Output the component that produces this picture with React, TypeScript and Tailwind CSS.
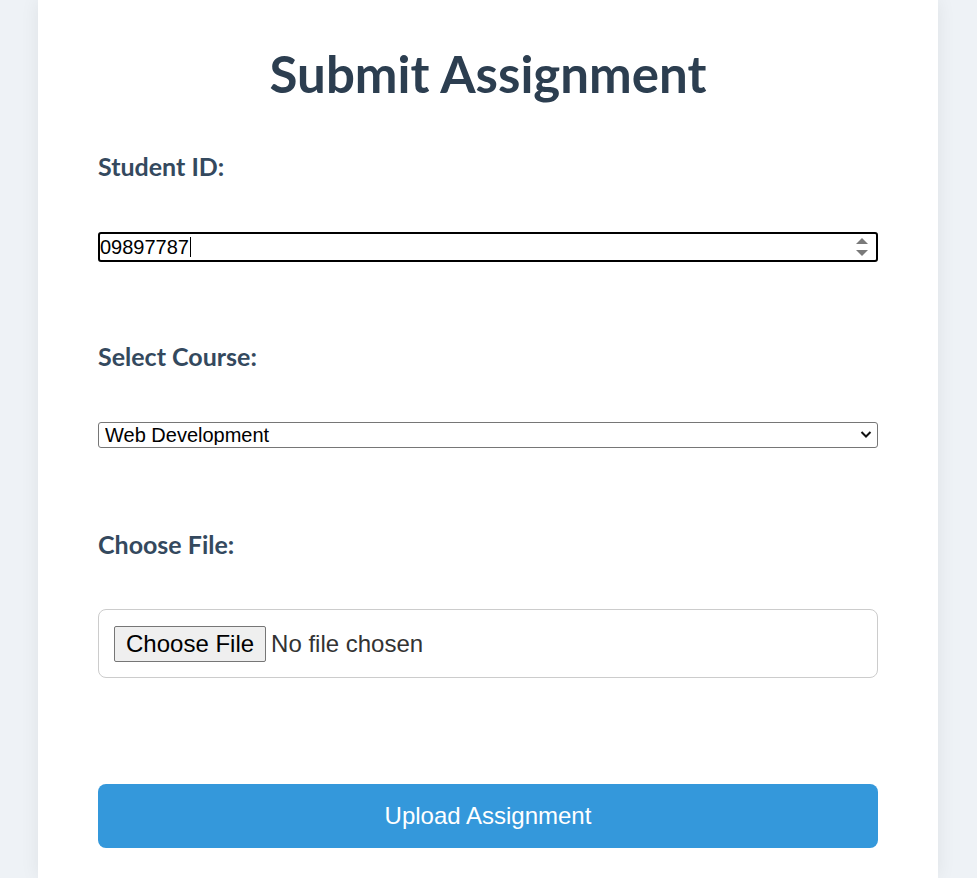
import React from 'react';

const headFont = { fontFamily: 'Lato, "Open Sans", sans-serif' };

const Label = ({ children, className }: { children: React.ReactNode; className?: string }) => (
	<label className={`block text-[25px] leading-[30px] font-bold text-[#34495e] ${className ?? ''}`} style={headFont}>
		{children}
	</label>
);

const App = () => {
	return (
		<div className="min-h-screen bg-[#eef2f6] font-['Liberation_Sans',Arial,sans-serif]">
			<div className="ml-[38px] w-[900px] bg-white px-[60px] pt-[45px] pb-[30px] shadow-[0_0_18px_rgba(0,0,0,0.07)]">
				<h1 className="text-center text-[51px] leading-[58px] font-bold text-[#2c3e50]" style={headFont}>
					Submit Assignment
				</h1>

				<Label className="mt-[48px]">Student ID:</Label>
				<div className="relative mt-[51px] flex h-[30px] items-center rounded-[3px] border-2 border-black text-[20px] text-black">
					<span className="leading-none">09897787</span>
					<span className="ml-px h-[20px] w-px bg-black" />
					{/* number spinner */}
					<svg className="absolute right-[7px] top-[3px]" width="14" height="20" viewBox="0 0 14 20">
						<path d="M7 1 L13 7 L1 7 Z" fill="#7a7a7a" />
						<path d="M1 13 L13 13 L7 19 Z" fill="#7a7a7a" />
					</svg>
				</div>

				<Label className="mt-[79px]">Select Course:</Label>
				<div className="relative mt-[51px]">
					<select
						defaultValue="web"
						className="block h-[26px] w-full appearance-none rounded-[3px] border border-[#767676] bg-white pl-[6px] text-[20px] leading-none text-black"
					>
						<option value="web">Web Development</option>
						<option value="data">Data Science</option>
						<option value="design">UI/UX Design</option>
					</select>
					<svg className="pointer-events-none absolute right-[6px] top-[8px]" width="12" height="9" viewBox="0 0 12 9">
						<path d="M1.5 2 L6 6.5 L10.5 2" fill="none" stroke="#111" strokeWidth="2" />
					</svg>
				</div>

				<Label className="mt-[81px]">Choose File:</Label>
				<div className="mt-[50px] flex h-[69px] items-center rounded-[8px] border border-[#cccccc] px-[15px]">
					<button className="h-[36px] rounded-[2px] border border-[#767676] bg-[#efefef] px-[11px] text-[24px] leading-none text-black">
						Choose File
					</button>
					<span className="ml-[5px] text-[24px] leading-none text-[#333]">No file chosen</span>
				</div>

				<button className="mt-[106px] block h-[64px] w-full rounded-[8px] bg-[#3498db] text-[24px] text-white">
					Upload Assignment
				</button>
			</div>
		</div>
	);
};

export default App;
